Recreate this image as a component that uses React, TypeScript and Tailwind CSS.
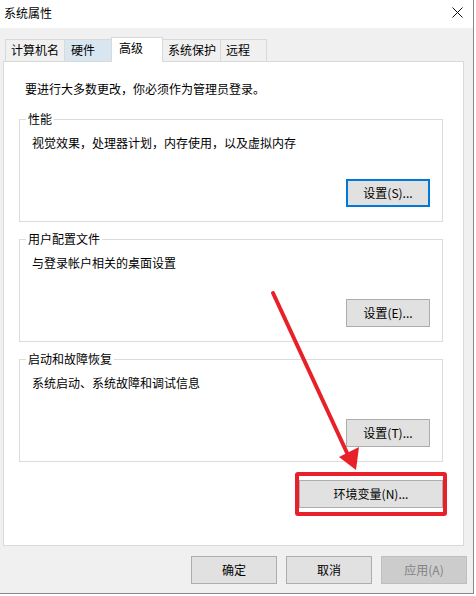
import type { ReactNode } from 'react';

const font = { fontFamily: '"Noto Sans CJK SC", "Noto Sans", sans-serif' };

type Tab = { label: string; w: string; state?: 'hover' | 'active' };

const tabs: Tab[] = [
  { label: '计算机名', w: 'w-[60px]' },
  { label: '硬件', w: 'w-[48px]', state: 'hover' },
  { label: '高级', w: 'w-[52px]', state: 'active' },
  { label: '系统保护', w: 'w-[59px]' },
  { label: '远程', w: 'w-[47px]' },
];

function TabItem({ tab, first }: { tab: Tab; first: boolean }) {
  const base = `${tab.w} ${first ? '' : '-ml-px'} border border-b-0 pt-[2px] text-[12px] leading-[16px] text-black`;
  if (tab.state === 'active') {
    return (
      <div className={`${base} relative z-10 h-[25px] -mb-px border-[#d9d9d9] bg-white pl-[7px]`}>
        {tab.label}
      </div>
    );
  }
  if (tab.state === 'hover') {
    return (
      <div className={`${base} h-[22px] border-[#d9d9d9] bg-[#d8e6f2] pl-[6px]`}>{tab.label}</div>
    );
  }
  return <div className={`${base} h-[22px] border-[#d9d9d9] bg-[#f0f0f0] pl-[5px]`}>{tab.label}</div>;
}

function Btn({
  children,
  w = 'w-[84px]',
  focused = false,
  disabled = false,
}: {
  children: ReactNode;
  w?: string;
  focused?: boolean;
  disabled?: boolean;
}) {
  const border = focused
    ? 'border-2 border-[#0078d7] bg-[#e1e1e1] text-black'
    : disabled
      ? 'border border-[#bfbfbf] bg-[#cccccc] text-[#838383]'
      : 'border border-[#adadad] bg-[#e1e1e1] text-black';
  return (
    <div className={`${w} h-[28px] ${border} flex items-center justify-center text-[12px] leading-[16px]`}>
      {children}
    </div>
  );
}

function Group({ title, desc, button, focused }: { title: string; desc: string; button: string; focused?: boolean }) {
  return (
    <div className="w-[424px] border border-[#dcdcdc] pb-[14px]">
      <div className="-mt-[9px] ml-[6px] w-fit bg-white px-[2px] text-[12px] leading-[16px] text-black">{title}</div>
      <div className="mt-[8px] pl-[12px] text-[12px] leading-[16px] text-black">{desc}</div>
      <div className="mt-[28px] flex justify-end pr-[12px]">
        <Btn focused={focused}>{button}</Btn>
      </div>
    </div>
  );
}

export default function App() {
  return (
    <div className="relative h-[596px] w-[476px] bg-white" style={font}>
      <div className="flex h-[594px] w-[474px] flex-col border-r border-b border-[#888888] bg-[#f0f0f0]">
        {/* title bar */}
        <div className="flex h-[28px] items-center justify-between bg-white pl-[4px] pr-[10px]">
          <span className="-mt-[2px] text-[12px] leading-[16px] text-black">系统属性</span>
          <svg width="11" height="11" viewBox="0 0 11 11" className="-mt-[3px]">
            <path d="M0.5 0.5L10.5 10.5M10.5 0.5L0.5 10.5" stroke="#111" strokeWidth="1" />
          </svg>
        </div>

        {/* tabs */}
        <div className="mt-[9px] flex items-end pl-[5px]">
          {tabs.map((t, i) => (
            <TabItem key={t.label} tab={t} first={i === 0} />
          ))}
        </div>

        {/* tab page */}
        <div className="ml-[3px] flex h-[485px] w-[461px] flex-col border border-[#d9d9d9] bg-white px-[15px]">
          <div className="mt-[19px] ml-[6px] text-[12px] leading-[16px] text-black">
            要进行大多数更改，你必须作为管理员登录。
          </div>
          <div className="mt-[22px] flex flex-col gap-[17px]">
            <Group title="性能" desc="视觉效果，处理器计划，内存使用，以及虚拟内存" button="设置(S)..." focused />
            <Group title="用户配置文件" desc="与登录帐户相关的桌面设置" button="设置(E)..." />
            <Group title="启动和故障恢复" desc="系统启动、系统故障和调试信息" button="设置(T)..." />
          </div>
          <div className="mt-[10px] ml-[276px] w-[152px] rounded-[3px] border-4 border-[#e8202a] py-[4px]">
            <Btn w="w-[144px]">环境变量(N)...</Btn>
          </div>
        </div>

        {/* dialog buttons */}
        <div className="mt-[10px] flex justify-end gap-[9px] pr-[6px]">
          <Btn w="w-[86px]">确定</Btn>
          <Btn w="w-[86px]">取消</Btn>
          <Btn w="w-[86px]" disabled>
            应用(A)
          </Btn>
        </div>
      </div>

      {/* red annotation arrow */}
      <svg className="pointer-events-none absolute inset-0" width="476" height="596" viewBox="0 0 476 596">
        <line x1="273" y1="293" x2="348" y2="455" stroke="#e8202a" strokeWidth="4" strokeLinecap="round" />
        <polygon points="356,470 339,457 359,447" fill="#e8202a" />
      </svg>
    </div>
  );
}
